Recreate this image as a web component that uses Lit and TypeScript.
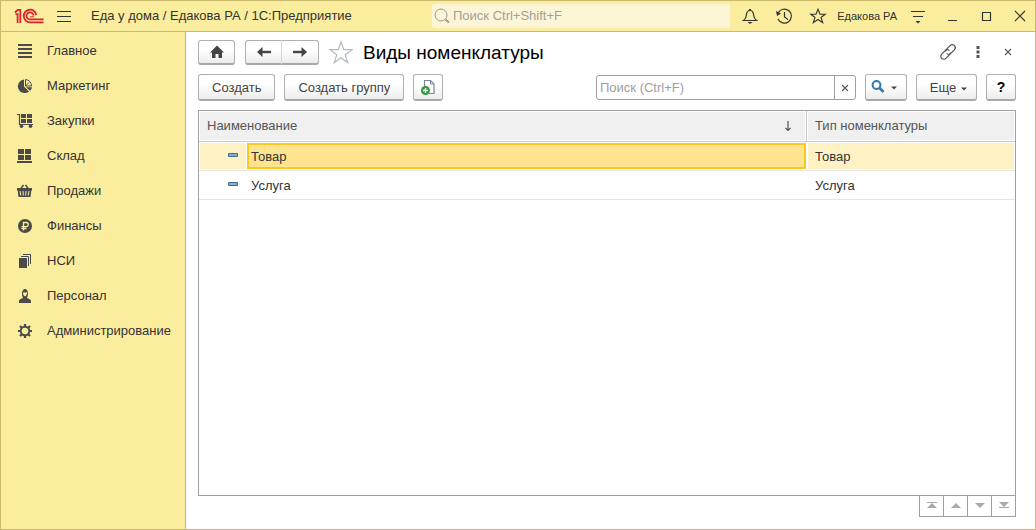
import { LitElement, html, css, svg } from "lit";
import { customElement, property } from "lit/decorators.js";

const icons: Record<string, unknown> = {
  main: svg`<path d="M1 2h14M1 6h14M1 10h14M1 14h14" stroke="currentColor" stroke-width="2"/>`,
  marketing: svg`<path d="M7 1.500a6.800 6.800 0 1 0 5 12L7 8.500z" fill="currentColor"/><path d="M8.500 8V1.500A6.300 6.300 0 0 1 14.500 8zM12 4.500 8.500 8" fill="none" stroke="currentColor"/><path d="M9 9.200h6a6 6 0 0 1-2 3.600z" fill="currentColor"/>`,
  purchases: svg`<path d="M0 1.500h2.500v10H16" fill="none" stroke="currentColor" stroke-width="1.200"/><path d="M4 1h5v4H4zM10 1h5v4h-5zM4 6h5v4H4zM10 6h5v4h-5z" fill="currentColor"/><circle cx="4.500" cy="13.300" r="1.800" fill="currentColor"/><circle cx="13.500" cy="13.300" r="1.800" fill="currentColor"/>`,
  stock: svg`<path d="M1 1h6v5H1zM8 1h6v5H8zM1 7h6v5H1zM8 7h6v5H8zM0 13h15v2H0z" fill="currentColor"/>`,
  sales: svg`<path d="M3.500 6l3-4M11.500 6l-3-4" stroke="currentColor" stroke-width="1.500"/><path d="M0 5h15v2.500h-.7L13.500 14h-12L.7 7.500H0z" fill="currentColor"/><path d="M3 8l.8 4.500M6 8l.3 4.500M9 8l-.3 4.500M12 8l-.8 4.500" stroke="#fbed9e"/>`,
  finance: svg`<circle cx="8" cy="8" r="7" fill="currentColor"/><path d="M6.500 12.500V4.500h2.700a2.100 2.100 0 0 1 0 4.200H4.500M4.500 10.500h5" fill="none" stroke="#fbed9e" stroke-width="1.300"/>`,
  catalogs: svg`<path d="M2 5h8v10H2z" fill="currentColor"/><path d="M4 3.500h7.500V13M6 1.500h7.500V11" fill="none" stroke="currentColor"/>`,
  staff: svg`<path d="M2 15v-2c0-1.500 2-2.500 4.200-3C4.500 8 4.300 1 8 1s3.500 7 1.800 9c2.200.5 4.200 1.500 4.200 3v2z" fill="currentColor"/><path d="M6 4.500c2 .4 3-.3 4-.3 0 2-.8 4-2 4s-2-1.700-2-3.700z" fill="#fbed9e"/>`,
  admin: svg`<circle cx="8" cy="8" r="4.300" fill="none" stroke="currentColor" stroke-width="2"/><path d="M8 1v3M8 12v3M1 8h3M12 8h3M3 3l2 2M11 11l2 2M3 13l2-2M11 5l2-2" stroke="currentColor" stroke-width="2.200"/>`,
  burger: svg`<path d="M1 3.500h14M1 8.500h14M1 13.500h14" stroke="currentColor"/>`,
  lens: svg`<circle cx="7" cy="7" r="6" fill="none" stroke="currentColor"/><path d="m11.500 11.500 3.500 3" stroke="currentColor" stroke-width="2"/>`,
  bell: svg`<path d="M1.500 12.500c2-1.500 2.800-3 3-6C4.700 3.800 6 2.500 8 2.500s3.300 1.300 3.500 4c.2 3 1 4.500 3 6z" fill="none" stroke="currentColor" stroke-width="1.200"/><path d="M8 1v1.500" stroke="currentColor" stroke-width="2"/><path d="M5.500 14h5L8 16z" fill="currentColor"/>`,
  history: svg`<path d="M2.200 4.800A7 7 0 1 1 2 11M8.500 4v5l3.500 2.500" fill="none" stroke="currentColor" stroke-width="1.200"/><path d="M0 3l5 2.500L1 8z" fill="currentColor"/>`,
  star: svg`<path d="m8 1.300 2 5h5.200l-4.200 3.200 1.700 5.200L8 11.500l-4.700 3.200L5 9.500.8 6.300H6z" fill="none" stroke="currentColor" stroke-width="1.100"/>`,
  starLarge: svg`<path d="m8 .5 1.800 5.300H15.300l-4.500 3.300 1.700 5.300L8 11.100l-4.500 3.300 1.700-5.300L.7 5.800h5.500z" fill="none" stroke="currentColor" stroke-width=".8"/>`,
  settings: svg`<path d="M1 3.500h14M3 8.500h10" stroke="currentColor" stroke-width="1.200"/><path d="M5.500 13h5L8 15.500z" fill="currentColor"/>`,
  minimize: svg`<path d="M4 12.500h9" stroke="currentColor"/>`,
  maximize: svg`<path d="M4.500 4.500h8v8h-8z" fill="none" stroke="currentColor" stroke-width="1.200"/>`,
  close: svg`<path d="m3 3 10 10M13 3 3 13" stroke="currentColor" stroke-width="1.100"/>`,
  home: svg`<path d="M8 1.500 1 8.500h2V14h3.500v-4h3v4H13V8.500h2z" fill="currentColor"/>`,
  back: svg`<path d="M15 8H5" stroke="currentColor" stroke-width="2.400"/><path d="M6.500 3v10L1 8z" fill="currentColor"/>`,
  forward: svg`<path d="M1 8h10" stroke="currentColor" stroke-width="2.400"/><path d="M9.500 3v10L15 8z" fill="currentColor"/>`,
  link: svg`<g transform="rotate(-45 8 8)" fill="none" stroke="currentColor" stroke-width="1.200"><path d="M9.500 10A3 3 0 0 1 7 11H2a3 3 0 0 1 0-6h5a3 3 0 0 1 3 3"/><path d="M6.500 6A3 3 0 0 1 9 5h5a3 3 0 0 1 0 6H9a3 3 0 0 1-3-3"/></g>`,
  dots: svg`<path d="M6.500 2h3v3h-3zM6.500 6.500h3v3h-3zM6.500 11h3v3h-3z" fill="currentColor"/>`,
  cross: svg`<path d="m5 5 6 6M11 5l-6 6" stroke="currentColor" stroke-width="1.100"/>`,
  addFile: svg`<path d="M4.500 8V1.500h6l3.500 3.500v9.500H9" fill="#fff" stroke="#7b8797" stroke-width="1.200"/><path d="M10.500 1.500V5H14" fill="none" stroke="#7b8797"/><circle cx="5.500" cy="11.500" r="4.500" fill="#2c9a3c"/><path d="M5.500 9v5M3 11.500h5" stroke="#fff" stroke-width="1.300"/>`,
  find: svg`<circle cx="6.500" cy="6" r="3.900" fill="none" stroke="#3478ae" stroke-width="2"/><path d="m9.500 9 4 4" stroke="#3478ae" stroke-width="2.600"/>`,
  caret: svg`<path d="M5 7.500h6l-3 3z" fill="currentColor"/>`,
  sort: svg`<path d="M8 3v9M5.500 10 8 12.500l2.500-2.500" fill="none" stroke="currentColor" stroke-width="1.200"/>`,
  item: svg`<path d="M3.500 6.500h9v3h-9z" fill="#7db1d8" stroke="#466c8b"/>`,
  first: svg`<path d="M3 4h10v1H3zM8 5l5 5H3z" fill="currentColor"/>`,
  up: svg`<path d="m8 5 5 5H3z" fill="currentColor"/>`,
  down: svg`<path d="M3 5h10l-5 5z" fill="currentColor"/>`,
  last: svg`<path d="M3 4h10L8 9zM3 9h10v1H3z" fill="currentColor"/>`,
};

@customElement("ui-icon")
export class UiIcon extends LitElement {
  @property() name = "";
  static styles = css`
    :host { display: block; flex: none; width: 16px; height: 16px; }
    svg { display: block; width: 100%; height: 100%; overflow: visible; }
  `;
  render() {
    return html`<svg viewBox="0 0 16 16" aria-hidden="true">${icons[this.name]}</svg>`;
  }
}

const sections = [
  ["main", "Главное"],
  ["marketing", "Маркетинг"],
  ["purchases", "Закупки"],
  ["stock", "Склад"],
  ["sales", "Продажи"],
  ["finance", "Финансы"],
  ["catalogs", "НСИ"],
  ["staff", "Персонал"],
  ["admin", "Администрирование"],
];

const rows = [
  { name: "Товар", type: "Товар" },
  { name: "Услуга", type: "Услуга" },
];

@customElement("app-root")
export class AppRoot extends LitElement {
  static styles = css`
    :host {
      display: flex;
      flex-direction: column;
      box-sizing: border-box;
      min-height: 100vh;
      border: 1px solid #c8b96c;
      background: #fff;
      color: #333;
      font: 13px/16px "Liberation Sans", Arial, sans-serif;
    }
    * { box-sizing: border-box; }
    button, input { font: inherit; color: inherit; margin: 0; }
    button { display: flex; align-items: center; justify-content: center; padding: 0; border: 0; background: none; white-space: nowrap; }

    .topbar {
      display: grid;
      grid-template-columns: auto minmax(120px, 298px) 1fr;
      align-items: center;
      height: 31px;
      background: #fbed9e;
      border-bottom: 1px solid #c8b96c;
    }
    .brand { display: flex; align-items: center; width: 431px; padding-left: 13px; }
    .logo { width: 30px; height: 16px; }
    .burger { margin: 0 19px 0 12px; }
    .global-search {
      display: flex;
      align-items: center;
      gap: 3px;
      height: 24px;
      padding: 0 2px;
      border-radius: 3px;
      background: #fdf6d6;
      color: #999;
    }
    .global-search input { flex: 1; min-width: 0; padding: 0; border: 0; outline: 0; background: none; }
    input::placeholder { color: #a0a0a0; opacity: 1; }
    .tools { display: flex; align-items: center; justify-content: flex-end; padding-right: 7px; }
    .tools .group { display: flex; gap: 18px; }
    .user { margin: 0 13px 0 11px; font-size: 11px; }
    .window { display: flex; gap: 18px; margin-left: 18px; }

    .body { flex: 1; display: flex; }
    .sidebar { flex: none; width: 185px; padding-top: 1px; background: #fbed9e; border-right: 1px solid #c8b96c; }
    .sidebar a { display: flex; align-items: center; gap: 14px; height: 35px; padding-left: 16px; color: inherit; text-decoration: none; }
    .sidebar ui-icon { color: #4a4a4a; }

    main { flex: 1; min-width: 0; display: flex; flex-direction: column; padding: 8px 19px 12px 12px; }
    .heading, .toolbar { display: flex; align-items: center; }
    .heading { gap: 10px; height: 25px; margin-bottom: 9px; }
    .toolbar { gap: 9px; height: 27px; margin-bottom: 9px; }
    h1 { flex: 1; margin: 0; font-size: 19px; line-height: 24px; font-weight: 400; color: #000; }
    .favorite { color: #b4bac2; }
    .favorite ui-icon { width: 24px; height: 24px; }
    .page-tools { display: flex; gap: 14px; padding-bottom: 2px; color: #555; }
    .btn {
      height: 27px;
      border: 1px solid #b0b0b0;
      border-bottom: 2px solid #a8a8a8;
      border-radius: 3px;
      background: linear-gradient(#fff 40%, #ececec);
      color: #444;
      padding: 1px 13px 0;
    }
    .heading .btn { height: 25px; width: 37px; padding: 0; }
    .nav { display: flex; }
    .nav .btn:first-child { border-radius: 3px 0 0 3px; border-right-color: #d8d8d8; }
    .nav .btn:last-child { border-radius: 0 3px 3px 0; border-left: 0; }
    .btn.square { width: 30px; padding: 0; }
    .btn.drop { width: 42px; padding: 0; }
    .btn.more { width: 61px; padding: 1px 0 0 9px; }
    .btn.help { font-weight: 700; color: #000; font-size: 14px; }
    .spacer { flex: 1; }
    .list-search {
      display: flex;
      width: 260px;
      height: 25px;
      border: 1px solid #a0a0a0;
      border-radius: 3px;
      background: #fff;
      overflow: hidden;
    }
    .list-search input { flex: 1; min-width: 0; padding: 0 3px; border: 0; outline: 0; background: none; }
    .list-search button { width: 21px; border-left: 1px solid #a0a0a0; color: #555; }

    .grid { flex: 1; border: 1px solid #a0a0a0; }
    table { width: 100%; border-collapse: separate; border-spacing: 0; table-layout: fixed; }
    .col-icon { width: 48px; }
    .col-type { width: 208px; }
    th, td { height: 29px; padding: 1px 8px 0; text-align: left; font-weight: 400; border-bottom: 1px solid #e4e4e4; }
    th { height: 31px; padding-top: 0; color: #555; background: #f0f0f0; border-bottom-color: #c8c8c8; box-shadow: inset 0 0 0 1px #fff; }
    th:first-child { border-right: 1px solid #c8c8c8; }
    th div { display: flex; justify-content: space-between; padding-right: 2px; }
    tr.selected td { background: #fef2c4; box-shadow: inset 0 0 0 1px #fff; }
    td:first-child { padding: 0 0 2px 26px; }
    td.name { padding: 1px 1px 1px 0; }
    .value { display: flex; align-items: center; height: 26px; padding: 2px 2px 0; border: 2px solid transparent; }
    .selected .value { background: #fee48e; border-color: #fac81e; }
    .pager { display: flex; justify-content: flex-end; }
    .pager button { width: 24px; height: 21px; border: 1px solid #a0a0a0; border-width: 0 1px 1px 0; color: #aaa; }
    .pager button:first-child { width: 25px; border-left-width: 1px; }
  `;

  render() {
    return html`
      <header class="topbar">
        <div class="brand">
          <svg class="logo" viewBox="0 0 30 16" role="img" aria-label="1С" fill="none" stroke="#d9232e" stroke-width="1.800">
            <path d="M1 4.500 3.800 1.900H6.300V15M1.500 6.200H3.600V15" />
            <path d="M22.300 7A6.300 6.300 0 1 0 16 14.300H29.500M19.500 7.500A3.500 3.500 0 1 0 16.500 11.300H29.500" />
            <path d="M16 8.800h4" stroke-width="1" />
          </svg>
          <button class="burger" aria-label="Меню"><ui-icon name="burger"></ui-icon></button>
          <span>Еда у дома / Едакова РА / 1С:Предприятие</span>
        </div>
        <label class="global-search">
          <ui-icon name="lens"></ui-icon>
          <input type="text" aria-label="Поиск" placeholder="Поиск Ctrl+Shift+F" />
        </label>
        <div class="tools">
          <div class="group">
            <button aria-label="Уведомления"><ui-icon name="bell"></ui-icon></button>
            <button aria-label="История"><ui-icon name="history"></ui-icon></button>
            <button aria-label="Избранное"><ui-icon name="star"></ui-icon></button>
          </div>
          <span class="user">Едакова РА</span>
          <button aria-label="Настройки"><ui-icon name="settings"></ui-icon></button>
          <div class="window">
            <button aria-label="Свернуть"><ui-icon name="minimize"></ui-icon></button>
            <button aria-label="Развернуть"><ui-icon name="maximize"></ui-icon></button>
            <button aria-label="Закрыть"><ui-icon name="close"></ui-icon></button>
          </div>
        </div>
      </header>
      <div class="body">
        <nav class="sidebar">
          ${sections.map(([icon, label]) => html`<a href="#${icon}"><ui-icon name=${icon}></ui-icon>${label}</a>`)}
        </nav>
        <main>
          <div class="heading">
            <button class="btn" aria-label="Начальная страница"><ui-icon name="home"></ui-icon></button>
            <div class="nav">
              <button class="btn" aria-label="Назад"><ui-icon name="back"></ui-icon></button>
              <button class="btn" aria-label="Вперед"><ui-icon name="forward"></ui-icon></button>
            </div>
            <button class="favorite" aria-label="В избранное"><ui-icon name="starLarge"></ui-icon></button>
            <h1>Виды номенклатуры</h1>
            <div class="page-tools">
              <button aria-label="Ссылка"><ui-icon name="link"></ui-icon></button>
              <button aria-label="Действия"><ui-icon name="dots"></ui-icon></button>
              <button aria-label="Закрыть"><ui-icon name="cross"></ui-icon></button>
            </div>
          </div>
          <div class="toolbar">
            <button class="btn">Создать</button>
            <button class="btn">Создать группу</button>
            <button class="btn square" aria-label="Создать копированием"><ui-icon name="addFile"></ui-icon></button>
            <span class="spacer"></span>
            <div class="list-search">
              <input type="text" aria-label="Поиск" placeholder="Поиск (Ctrl+F)" />
              <button aria-label="Очистить"><ui-icon name="cross"></ui-icon></button>
            </div>
            <button class="btn drop" aria-label="Найти"><ui-icon name="find"></ui-icon><ui-icon name="caret"></ui-icon></button>
            <button class="btn more">Еще<ui-icon name="caret"></ui-icon></button>
            <button class="btn square help">?</button>
          </div>
          <div class="grid">
            <table>
              <colgroup><col class="col-icon" /><col /><col class="col-type" /></colgroup>
              <thead>
                <tr>
                  <th colspan="2"><div>Наименование<ui-icon name="sort"></ui-icon></div></th>
                  <th>Тип номенклатуры</th>
                </tr>
              </thead>
              <tbody>
                ${rows.map((row, i) => html`
                  <tr class=${i === 0 ? "selected" : ""}>
                    <td><ui-icon name="item"></ui-icon></td>
                    <td class="name"><div class="value">${row.name}</div></td>
                    <td>${row.type}</td>
                  </tr>`)}
              </tbody>
            </table>
          </div>
          <div class="pager">
            <button aria-label="В начало"><ui-icon name="first"></ui-icon></button>
            <button aria-label="Вверх"><ui-icon name="up"></ui-icon></button>
            <button aria-label="Вниз"><ui-icon name="down"></ui-icon></button>
            <button aria-label="В конец"><ui-icon name="last"></ui-icon></button>
          </div>
        </main>
      </div>
    `;
  }
}
